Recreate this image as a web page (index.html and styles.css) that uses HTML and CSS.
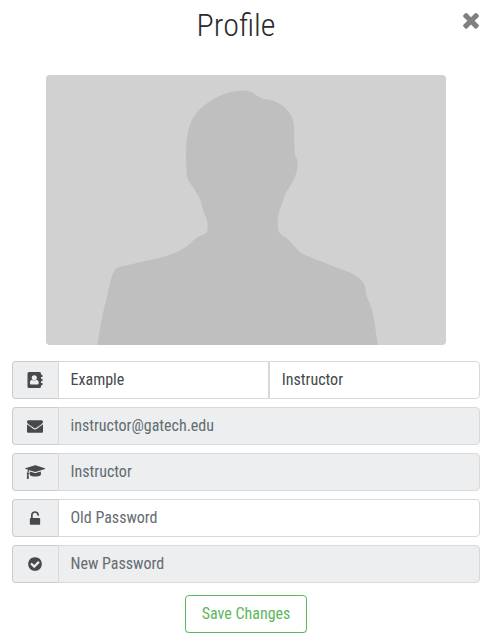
FILE: index.html
```html
<!DOCTYPE html>
<html lang="en">
<head>
<meta charset="utf-8">
<title>Profile</title>
<link rel="stylesheet" href="styles.css">
</head>
<body>
<main class="profile">
  <header class="header">
    <h1 class="title">Profile</h1>
    <button class="close" aria-label="Close"><svg width="24" height="24" viewBox="0 0 1792 1792"><path d="M1490 1322q0 40-28 68l-136 136q-28 28-68 28t-68-28l-294-294-294 294q-28 28-68 28t-68-28l-136-136q-28-28-28-68t28-68l294-294-294-294q-28-28-28-68t28-68l136-136q28-28 68-28t68 28l294 294 294-294q28-28 68-28t68 28l136 136q28 28 28 68t-28 68l-294 294 294 294q28 28 28 68z"/></svg></button>
  </header>
  <svg class="photo" viewBox="30 30 1200 810">
    <path d="M184 840C190 801 199 744 211 706C219 667 222 637 239 611Q243 607 260 604L384 575C421 564 446 550 464 534C481 518 491 512 505 508C515 504 515 496 515 480C514 458 503 448 498 424C495 401 484 390 475 372C463 354 453 345 452 326C449 290 449 250 453 217C460 165 482 134 519 111C548 91 580 77 620 77C653 75 657 94 680 101C723 104 751 125 767 154C779 180 773 225 776 266C781 281 786 284 785 302C782 333 766 359 749 384C742 402 738 421 730 436C725 452 724 479 727 492C730 506 739 512 749 517C765 529 779 551 796 565C833 582 877 597 914 612C948 624 976 637 986 661C991 674 989 689 993 697C1005 722 1013 747 1017 780L1025 840Z"/>
  </svg>
  <form class="form">
    <div class="group">
      <span class="addon"><svg width="16" height="16" viewBox="0 0 16 16"><path fill-rule="evenodd" d="M2 0H12.5Q14 0 14 1.5V2.7H15.2Q15.5 2.7 15.5 3V4.7Q15.5 5 15.2 5H14V6.8H15.2Q15.5 6.8 15.5 7.1V8.9Q15.5 9.2 15.2 9.2H14V11H15.2Q15.5 11 15.5 11.3V13Q15.5 13.3 15.2 13.3H14V14.5Q14 16 12.5 16H2Q.5 16 .5 14.5V1.5Q.5 0 2 0ZM7.3 3.2C5.7 3.2 4.7 4.3 4.7 5.8C4.7 7.4 5.9 8.5 7.3 8.5S9.9 7.4 9.9 5.8C9.9 4.3 8.9 3.2 7.3 3.2ZM4.8 7.8C3.5 8.1 2.9 9.5 2.9 11Q2.9 12.6 4.2 12.6H10.4Q11.7 12.6 11.7 11C11.7 9.5 11.1 8.1 9.8 7.8C8.3 9.2 6.3 9.2 4.8 7.8Z"/></svg></span>
      <input class="field" value="Example" aria-label="First name">
      <input class="field" value="Instructor" aria-label="Last name">
    </div>
    <div class="group">
      <span class="addon"><svg width="16" height="16" viewBox="0 0 1792 1792"><path d="M1792 710v794q0 66-47 113t-113 47h-1472q-66 0-113-47t-47-113v-794q44 49 101 87 362 246 497 345 57 42 92.5 65.5t94.5 48 110 24.5h2q51 0 110-24.5t94.5-48 92.5-65.5q170-123 498-345 57-39 100-87zm0-294q0 79-49 151t-122 123q-376 261-468 325-10 7-42.5 31t-54 38.5-52 32.5-57.5 27-50 9h-2q-23 0-50-9t-57.5-27-52-32.5-54-38.5-42.5-31q-91-64-262-182.5t-205-142.5q-62-42-117-115.5t-55-136.5q0-78 41.5-130t118.5-52h1472q65 0 112.5 47t47.5 113z"/></svg></span>
      <input class="field" value="instructor@gatech.edu" aria-label="Email" disabled>
    </div>
    <div class="group">
      <span class="addon"><svg width="20.57" height="16" viewBox="0 0 2304 1792"><path d="M1774 836l18 316q4 69-82 128t-235 93.5-323 34.5-323-34.5-235-93.5-82-128l18-316 574 181q22 7 48 7t48-7zm530-324q0 23-22 31l-1120 352q-4 1-10 1t-10-1l-652-206q-43 34-71 111.5t-34 178.5q63 36 63 109 0 69-58 107l58 433q2 14-8 25-9 11-24 11h-192q-15 0-24-11-10-11-8-25l58-433q-58-38-58-107 0-73 65-111 11-207 98-330l-333-104q-22-8-22-31t22-31l1120-352q4-1 10-1t10 1l1120 352q22 8 22 31z"/></svg></span>
      <input class="field" value="Instructor" aria-label="Role" disabled>
    </div>
    <div class="group">
      <span class="addon"><svg width="16" height="16" viewBox="0 0 1792 1792"><path d="M1376 896q40 0 68 28t28 68v576q0 40-28 68t-68 28h-960q-40 0-68-28t-28-68v-576q0-40 28-68t68-28h32v-320q0-185 131.5-316.5t316.5-131.5 316.5 131.5 131.5 316.5q0 26-19 45t-45 19h-64q-26 0-45-19t-19-45q0-106-75-181t-181-75-181 75-75 181v320h736z"/></svg></span>
      <input class="field" type="password" placeholder="Old Password">
    </div>
    <div class="group">
      <span class="addon"><svg width="16" height="16" viewBox="0 0 1792 1792"><path d="M1412 734q0-28-18-46l-91-90q-19-19-45-19t-45 19l-408 407-226-226q-19-19-45-19t-45 19l-91 90q-18 18-18 46 0 27 18 45l362 362q19 19 45 19 27 0 46-19l543-543q18-18 18-45zm252 162q0 209-103 385.5t-279.5 279.5-385.5 103-385.5-103-279.5-279.5-103-385.5 103-385.5 279.5-279.5 385.5-103 385.5 103 279.5 279.5 103 385.5z"/></svg></span>
      <input class="field" type="password" placeholder="New Password" disabled>
    </div>
    <button class="save" type="button">Save Changes</button>
  </form>
</main>
</body>
</html>
```
FILE: styles.css
```css
* { box-sizing: border-box; }

body {
  margin: 0;
  background: #fff;
  color: #292b2c;
  font-family: "Roboto Condensed", Roboto, sans-serif;
  font-stretch: 75%;
  font-size: 16px;
  line-height: 24px;
}

.profile {
  display: flex;
  flex-direction: column;
  padding: 0 11px 0 12px;
}

.header {
  display: flex;
  height: 75px;
  padding-top: 8px;
}

.title {
  flex: 1;
  margin: 0;
  text-align: center;
  font-size: 32px;
  line-height: 35px;
  font-weight: 300;
}

.close {
  display: flex;
  flex: none;
  justify-content: center;
  align-items: flex-start;
  width: 20px;
  height: 26px;
  padding: 0;
  border: 0;
  background: none;
}

.close svg { flex: none; margin-left: 1px; fill: #808080; }

.photo {
  display: block;
  align-self: center;
  width: 400px;
  height: 270px;
  border-radius: 4px;
  background: #d1d1d1;
  fill: #bfbfbf;
}

.form {
  display: flex;
  flex-direction: column;
  gap: 8px;
  margin-top: 16px;
}

.group { display: flex; height: 38px; }

.addon {
  display: flex;
  flex: none;
  align-items: center;
  justify-content: center;
  width: 46px;
  padding-right: 1px;
  border: 1px solid #ccc;
  border-right: 0;
  border-radius: 4px 0 0 4px;
  background: #eceeef;
}

.addon svg { display: block; fill: #464a4c; }

.field {
  flex: 1;
  min-width: 0;
  margin: 0;
  padding: 0 12px 1px;
  border: 1px solid #d9d9d9;
  border-radius: 0;
  background: #fff;
  color: #464a4c;
  font: inherit;
}

.addon + .field { padding-left: 11.5px; }
.field:last-child { border-radius: 0 4px 4px 0; }
.field:disabled { background: #eceeef; color: #636c72; }
.field::placeholder { color: #636c72; opacity: 1; }

.save {
  align-self: center;
  width: 122px;
  height: 38px;
  margin-top: 4px;
  padding: 0 0 1px;
  border: 1px solid #5cb85c;
  border-radius: 4px;
  background: #fff;
  box-shadow: 0 1px 1px rgba(0, 0, 0, .12);
  color: #5cb85c;
  font: inherit;
}
```
